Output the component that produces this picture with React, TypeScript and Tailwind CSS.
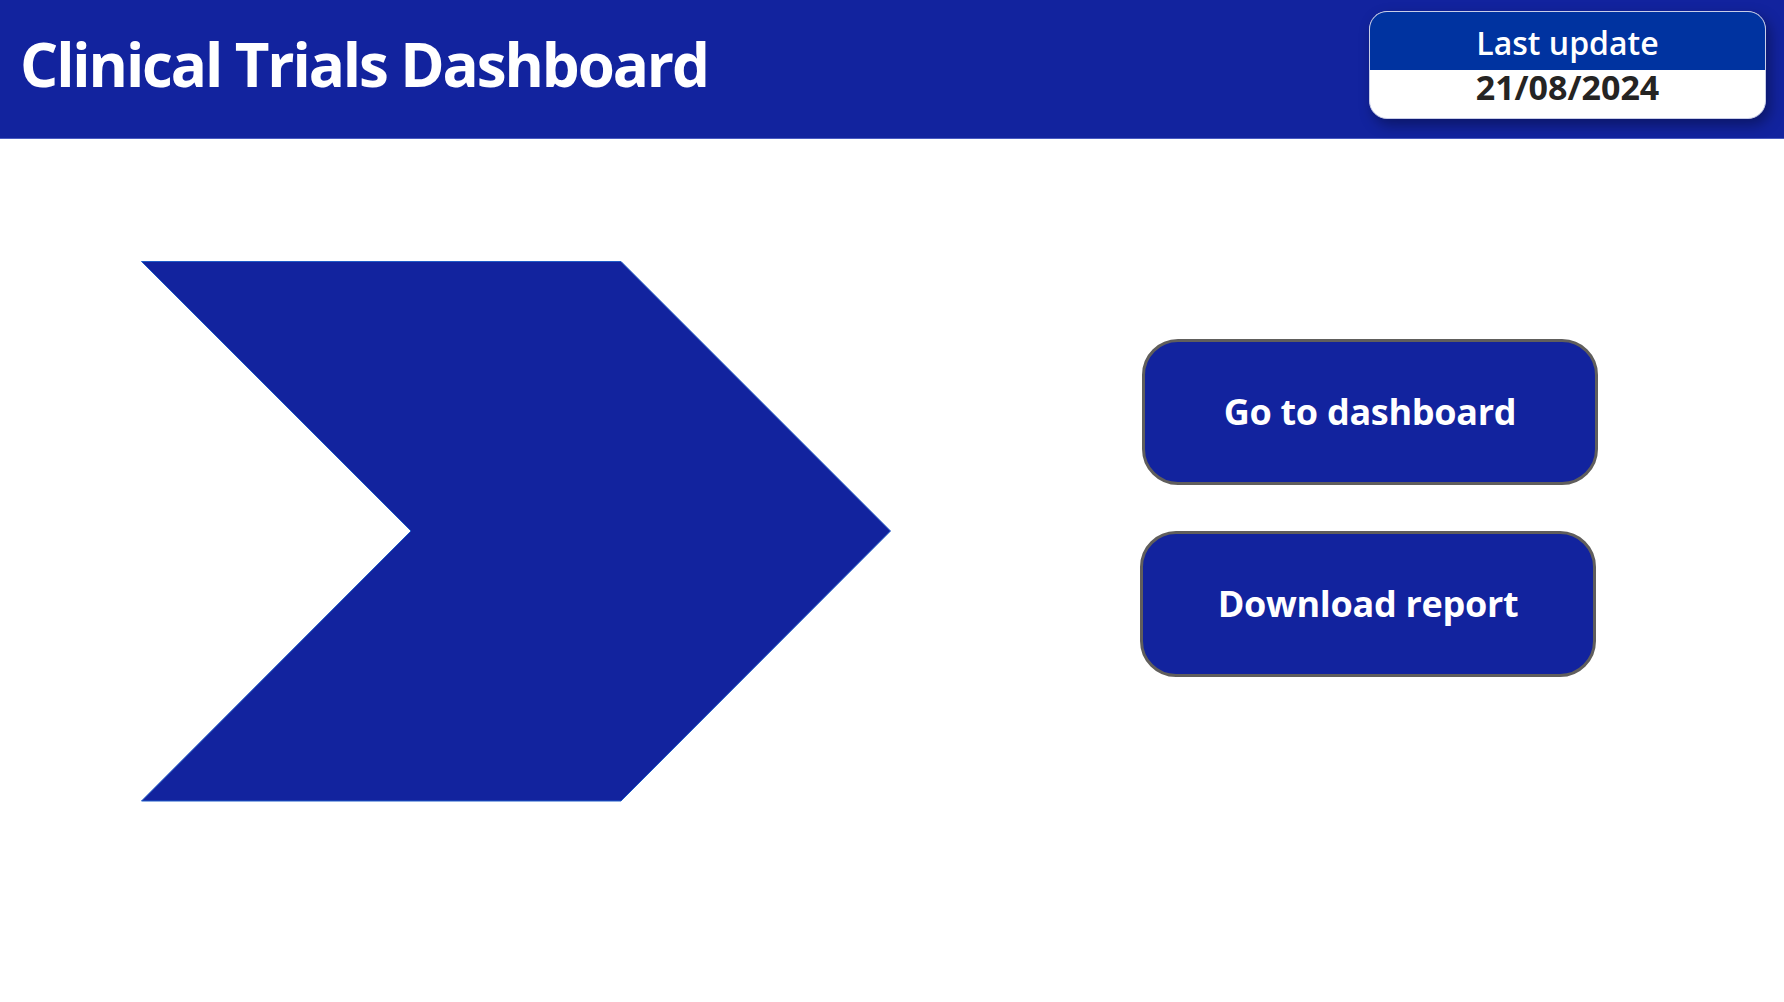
import React from "react";

const FONT = "font-['Open_Sans','Noto_Sans',sans-serif]";

function Chevron() {
  // the big arrow shape on the landing page
  return (
    <svg width="751" height="541" viewBox="0 0 751 541" className="block shrink-0">
      <polygon
        points="0.5,0.5 480,0.5 749.5,270 480,540 0.5,540 270,270"
        fill="#12239e"
        stroke="#1f5cc8"
        strokeWidth="1"
      />
    </svg>
  );
}

function NavButton({ label, className = "" }: { label: string; className?: string }) {
  return (
    <button
      className={`flex h-[146px] w-[456px] items-center justify-center rounded-[36px] border-[3px] border-[#605e5c] bg-[#12239e] text-[36px] font-bold tracking-[-0.3px] text-white ${className}`}
    >
      {label}
    </button>
  );
}

export default function App() {
  return (
    <div className={`h-[1002px] w-[1784px] overflow-hidden bg-white ${FONT}`}>
      <header className="flex h-[139px] items-start justify-between border-b border-[#4a5bc0] bg-[#12239e] pr-[18px]">
        <h1 className="mt-[24px] pl-[20px] text-[60px] leading-[80px] font-bold tracking-[-2.1px] text-white">
          Clinical Trials Dashboard
        </h1>
        <div className="mt-[11px] flex h-[108px] w-[397px] flex-col overflow-hidden rounded-[18px] border border-[#c8cde8] bg-white shadow-[4px_6px_14px_rgba(0,0,0,0.35)]">
          <div className="flex h-[60px] items-center justify-center bg-[#0033a0] pt-[4px] text-[32px] leading-none font-semibold text-white">
            Last update
          </div>
          <div className="flex flex-1 items-center justify-center pb-[14px] text-[34px] leading-none font-bold text-[#252423]">
            21/08/2024
          </div>
        </div>
      </header>

      <main className="flex items-start pt-[122px] pl-[141px]">
        <Chevron />
        <div className="ml-[248px] mt-[78px] flex flex-col gap-[46px]">
          <NavButton label="Go to dashboard" className="ml-[2px]" />
          <NavButton label="Download report" className="w-[455px]" />
        </div>
      </main>
    </div>
  );
}
